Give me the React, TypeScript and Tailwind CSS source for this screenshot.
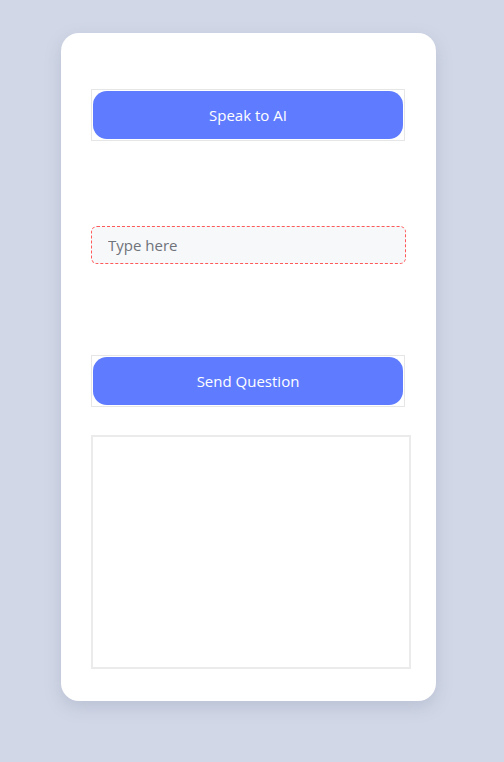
export default function App() {
  return (
    <div
      className="min-h-[762px] w-full bg-[#d1d7e6] pt-[33px]"
      style={{ fontFamily: '"Open Sans", "Noto Sans", sans-serif' }}
    >
      <div className="ml-[61px] flex h-[668px] w-[375px] flex-col rounded-[18px] bg-white pl-[30px] pt-[56px] shadow-[0_6px_16px_rgba(120,130,160,0.25)]">
        <div className="h-[52px] w-[314px] border-[1.5px] border-[#e6e6e6] p-px">
          <button className="flex h-full w-full items-center justify-center rounded-[14px] bg-[#5f7bff] text-[15px] text-white">
            Speak to AI
          </button>
        </div>

        <input
          type="text"
          placeholder="Type here"
          className="mt-[85px] h-[38px] w-[315px] rounded-[6px] border border-dashed border-[#ff5a5a] bg-[#f7f8fa] px-4 text-[15px] text-gray-700 outline-none placeholder:text-[#6f737a]"
        />

        <div className="mt-[91px] h-[52px] w-[314px] border-[1.5px] border-[#e6e6e6] p-px">
          <button className="flex h-full w-full items-center justify-center rounded-[14px] bg-[#5f7bff] text-[15px] text-white">
            Send Question
          </button>
        </div>

        <div className="mt-[28px] h-[234px] w-[320px] border-2 border-[#ebebeb] bg-white" />
      </div>
    </div>
  );
}
